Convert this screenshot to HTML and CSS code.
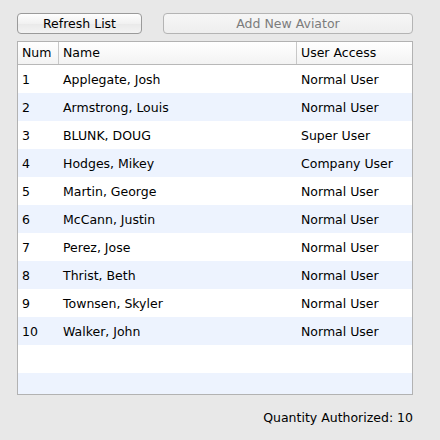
FILE: index.html
```html
<!DOCTYPE html>
<html>
<head>
<meta charset="utf-8">
<link rel="stylesheet" href="styles.css">
</head>
<body>
<div class="window">
  <div class="toolbar">
    <button class="btn btn-refresh">Refresh List</button>
    <button class="btn btn-add" disabled>Add New Aviator</button>
  </div>
  <div class="table">
    <div class="row head">
      <div class="c num">Num</div>
      <div class="c name">Name</div>
      <div class="c access">User Access</div>
    </div>
    <div class="row"><div class="c num">1</div><div class="c name">Applegate, Josh</div><div class="c access">Normal User</div></div>
    <div class="row alt"><div class="c num">2</div><div class="c name">Armstrong, Louis</div><div class="c access">Normal User</div></div>
    <div class="row"><div class="c num">3</div><div class="c name">BLUNK, DOUG</div><div class="c access">Super User</div></div>
    <div class="row alt"><div class="c num">4</div><div class="c name">Hodges, Mikey</div><div class="c access">Company User</div></div>
    <div class="row"><div class="c num">5</div><div class="c name">Martin, George</div><div class="c access">Normal User</div></div>
    <div class="row alt"><div class="c num">6</div><div class="c name">McCann, Justin</div><div class="c access">Normal User</div></div>
    <div class="row"><div class="c num">7</div><div class="c name">Perez, Jose</div><div class="c access">Normal User</div></div>
    <div class="row alt"><div class="c num">8</div><div class="c name">Thrist, Beth</div><div class="c access">Normal User</div></div>
    <div class="row"><div class="c num">9</div><div class="c name">Townsen, Skyler</div><div class="c access">Normal User</div></div>
    <div class="row alt"><div class="c num">10</div><div class="c name">Walker, John</div><div class="c access">Normal User</div></div>
    <div class="row"></div>
    <div class="row alt short"></div>
  </div>
  <div class="footer">Quantity Authorized: 10</div>
</div>
</body>
</html>
```
FILE: styles.css
```css
html, body {
  margin: 0;
  padding: 0;
  background: #e8e8e8;
}
body {
  font-family: "DejaVu Sans", "Liberation Sans", sans-serif;
  font-size: 12.5px;
  color: #000;
}
.window {
  width: 440px;
  height: 440px;
  box-sizing: border-box;
  padding: 13px 27px 0 17px;
}
.toolbar {
  display: flex;
  justify-content: space-between;
  height: 21px;
}
.btn {
  font: inherit;
  height: 21px;
  padding: 0;
  border: 1px solid #9a9a9a;
  border-radius: 4px;
  background: linear-gradient(#fefefe, #f1f1f1 50%, #e9e9e9 51%, #f3f3f3);
  color: #000;
  line-height: 19px;
}
.btn-refresh { width: 125px; }
.btn-add {
  width: 250px;
  color: #7c7c7c;
  border-color: #b4b4b4;
  background: linear-gradient(#f6f6f6, #eeeeee);
}
.table {
  margin-top: 7px;
  width: 396px;
  height: 354px;
  box-sizing: border-box;
  border: 1px solid #b2b2b2;
  background: #fff;
  overflow: hidden;
}
.row {
  display: flex;
  height: 28px;
  align-items: center;
}
.row.alt { background: #edf3fe; }
.row.short { height: 22px; }
.row.head {
  height: 22px;
  background: linear-gradient(#ffffff, #f3f3f3);
  border-bottom: 1px solid #b8b8b8;
}
.c {
  box-sizing: border-box;
  padding-left: 4px;
  white-space: nowrap;
}
.num { width: 41px; }
.name { width: 238px; }
.access { flex: 1; }
.head .c {
  height: 22px;
  line-height: 22px;
}
.head .num, .head .name { border-right: 1px solid #c8c8c8; }
.footer {
  margin-top: 15px;
  width: 396px;
  text-align: right;
}
```
